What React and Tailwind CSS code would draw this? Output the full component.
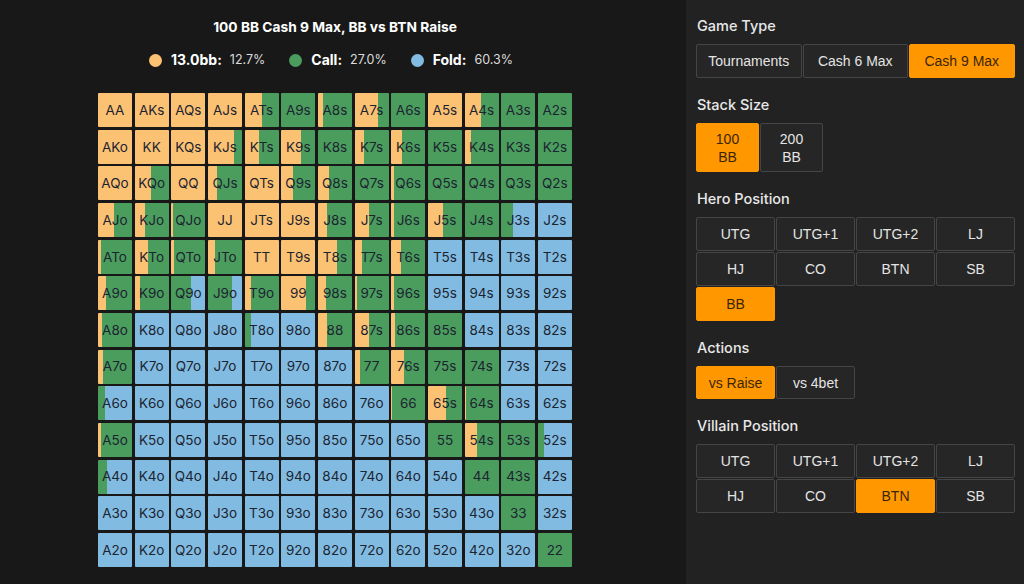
import React from "react";

const ORANGE = "#fcc274";
const GREEN = "#4b9d5e";
const BLUE = "#82bbe2";

// each hand: label, raise %, call % (what is left is fold)
const rows = [
  [["AA", 100, 0], ["AKs", 100, 0], ["AQs", 100, 0], ["AJs", 100, 0], ["ATs", 49, 51], ["A9s", 0, 100], ["A8s", 14, 86], ["A7s", 68, 32], ["A6s", 0, 100], ["A5s", 100, 0], ["A4s", 47, 53], ["A3s", 0, 100], ["A2s", 0, 100]],
  [["AKo", 100, 0], ["KK", 100, 0], ["KQs", 100, 0], ["KJs", 76, 24], ["KTs", 40, 60], ["K9s", 58, 42], ["K8s", 0, 100], ["K7s", 26, 74], ["K6s", 31, 69], ["K5s", 0, 100], ["K4s", 19, 81], ["K3s", 0, 100], ["K2s", 0, 100]],
  [["AQo", 100, 0], ["KQo", 48, 52], ["QQ", 100, 0], ["QJs", 26, 74], ["QTs", 100, 0], ["Q9s", 36, 64], ["Q8s", 32, 68], ["Q7s", 0, 100], ["Q6s", 8, 92], ["Q5s", 0, 100], ["Q4s", 0, 100], ["Q3s", 0, 100], ["Q2s", 0, 100]],
  [["AJo", 48, 52], ["KJo", 30, 70], ["QJo", 6, 94], ["JJ", 100, 0], ["JTs", 100, 0], ["J9s", 100, 0], ["J8s", 27, 73], ["J7s", 41, 59], ["J6s", 8, 92], ["J5s", 45, 55], ["J4s", 0, 100], ["J3s", 0, 36], ["J2s", 0, 0]],
  [["ATo", 8, 92], ["KTo", 37, 63], ["QTo", 8, 92], ["JTo", 21, 79], ["TT", 100, 0], ["T9s", 100, 0], ["T8s", 55, 45], ["T7s", 21, 79], ["T6s", 29, 71], ["T5s", 0, 0], ["T4s", 0, 0], ["T3s", 0, 0], ["T2s", 0, 0]],
  [["A9o", 23, 77], ["K9o", 14, 86], ["Q9o", 0, 60], ["J9o", 0, 70], ["T9o", 17, 83], ["99", 73, 27], ["98s", 24, 76], ["97s", 5, 95], ["96s", 8, 92], ["95s", 0, 0], ["94s", 0, 0], ["93s", 0, 0], ["92s", 0, 0]],
  [["A8o", 11, 89], ["K8o", 0, 0], ["Q8o", 0, 0], ["J8o", 0, 0], ["T8o", 0, 17], ["98o", 0, 0], ["88", 27, 73], ["87s", 41, 59], ["86s", 11, 89], ["85s", 0, 100], ["84s", 0, 0], ["83s", 0, 0], ["82s", 0, 0]],
  [["A7o", 15, 85], ["K7o", 0, 0], ["Q7o", 0, 0], ["J7o", 0, 0], ["T7o", 0, 0], ["97o", 0, 0], ["87o", 0, 0], ["77", 16, 84], ["76s", 39, 61], ["75s", 0, 100], ["74s", 0, 100], ["73s", 0, 0], ["72s", 0, 0]],
  [["A6o", 0, 20], ["K6o", 0, 0], ["Q6o", 0, 0], ["J6o", 0, 0], ["T6o", 0, 0], ["96o", 0, 0], ["86o", 0, 0], ["76o", 0, 0], ["66", 2, 98], ["65s", 52, 48], ["64s", 4, 96], ["63s", 0, 0], ["62s", 0, 0]],
  [["A5o", 10, 90], ["K5o", 0, 0], ["Q5o", 0, 0], ["J5o", 0, 0], ["T5o", 0, 0], ["95o", 0, 0], ["85o", 0, 0], ["75o", 0, 0], ["65o", 0, 0], ["55", 0, 100], ["54s", 34, 66], ["53s", 0, 100], ["52s", 0, 18]],
  [["A4o", 0, 25], ["K4o", 0, 0], ["Q4o", 0, 0], ["J4o", 0, 0], ["T4o", 0, 0], ["94o", 0, 0], ["84o", 0, 0], ["74o", 0, 0], ["64o", 0, 0], ["54o", 0, 0], ["44", 0, 100], ["43s", 0, 100], ["42s", 0, 0]],
  [["A3o", 0, 0], ["K3o", 0, 0], ["Q3o", 0, 0], ["J3o", 0, 0], ["T3o", 0, 0], ["93o", 0, 0], ["83o", 0, 0], ["73o", 0, 0], ["63o", 0, 0], ["53o", 0, 0], ["43o", 0, 0], ["33", 0, 100], ["32s", 0, 0]],
  [["A2o", 0, 0], ["K2o", 0, 0], ["Q2o", 0, 0], ["J2o", 0, 0], ["T2o", 0, 0], ["92o", 0, 0], ["82o", 0, 0], ["72o", 0, 0], ["62o", 0, 0], ["52o", 0, 0], ["42o", 0, 0], ["32o", 0, 0], ["22", 0, 100]],
];

const cellBackground = (raise, call) => {
  const end = raise + call;
  return `linear-gradient(to right, ${ORANGE} ${raise}%, ${GREEN} ${raise}%, ${GREEN} ${end}%, ${BLUE} ${end}%)`;
};

const Legend = ({ dot, name, value }) => (
  <div className="flex items-center">
    <span className={`w-[13px] h-[13px] rounded-full ${dot}`}></span>
    <span className="ml-[9px] text-[14px] font-bold text-white">{name}</span>
    <span className="ml-[8px] text-[12.5px] text-[#dcdcdc]">{value}</span>
  </div>
);

const Option = ({ label, active, className = "h-[34px]" }) => (
  <button
    className={`${className} flex items-center justify-center text-center rounded-[2px] border text-[14px] leading-[18px] font-['Liberation_Sans',sans-serif] ${
      active
        ? "bg-[#ff9800] border-[#ff9800] text-[#3b2508]"
        : "bg-[#262626] border-[#454545] text-[#e4e4e4]"
    }`}
  >
    {label}
  </button>
);

const Section = ({ title, children }) => (
  <section className="mb-[18px]">
    <h2 className="h-[18px] mb-[9px] pl-[1px] text-[14.5px] leading-[18px] font-medium text-[#e8e8e8]">
      {title}
    </h2>
    {children}
  </section>
);

const Positions = ({ items, active }) => (
  <div className="grid grid-cols-[repeat(4,79px)] gap-[1px]">
    {items.map((item) => (
      <Option key={item} label={item} active={item === active} />
    ))}
  </div>
);

const positions = ["UTG", "UTG+1", "UTG+2", "LJ", "HJ", "CO", "BTN", "SB"];

export default function App() {
  return (
    <div className="flex w-[1024px] h-[584px] overflow-hidden bg-[#181818] font-['Inter',sans-serif]">
      <main className="w-[686px] pl-[98px] pt-[18px]">
        <div className="w-[474px]">
          <h1 className="h-[18px] text-center text-[13.75px] leading-[18px] font-bold text-white">
            100 BB Cash 9 Max, BB vs BTN Raise
          </h1>
          <div className="flex justify-center gap-[24px] mt-[15px] mb-[24px] h-[18px] -translate-x-[4px] leading-[18px]">
            <Legend dot="bg-[#fcc274]" name="13.0bb:" value="12.7%" />
            <Legend dot="bg-[#4b9d5e]" name="Call:" value="27.0%" />
            <Legend dot="bg-[#82bbe2]" name="Fold:" value="60.3%" />
          </div>
          <div className="grid grid-cols-[repeat(13,34px)] auto-rows-[34px] gap-[2.67px]">
            {rows.flat().map(([label, raise, call]) => (
              <div
                key={label}
                className="flex items-center justify-center rounded-[1px] text-[13.5px] text-[#1c2430]"
                style={{ background: cellBackground(raise, call) }}
              >
                {label}
              </div>
            ))}
          </div>
        </div>
      </main>
      <aside className="w-[338px] bg-[#222222] pl-[10px] pt-[17px]">
        <Section title="Game Type">
          <div className="grid grid-cols-[repeat(3,105.5px)] gap-[1px]">
            <Option label="Tournaments" />
            <Option label="Cash 6 Max" />
            <Option label="Cash 9 Max" active />
          </div>
        </Section>
        <Section title="Stack Size">
          <div className="flex gap-[1px]">
            <Option label={<>100<br />BB</>} active className="w-[63px] h-[49px]" />
            <Option label={<>200<br />BB</>} className="w-[63px] h-[49px]" />
          </div>
        </Section>
        <Section title="Hero Position">
          <Positions items={[...positions, "BB"]} active="BB" />
        </Section>
        <Section title="Actions">
          <div className="flex gap-[1px]">
            <Option label="vs Raise" active className="w-[79px] h-[33px]" />
            <Option label="vs 4bet" className="w-[79px] h-[33px]" />
          </div>
        </Section>
        <Section title="Villain Position">
          <Positions items={positions} active="BTN" />
        </Section>
      </aside>
    </div>
  );
}
